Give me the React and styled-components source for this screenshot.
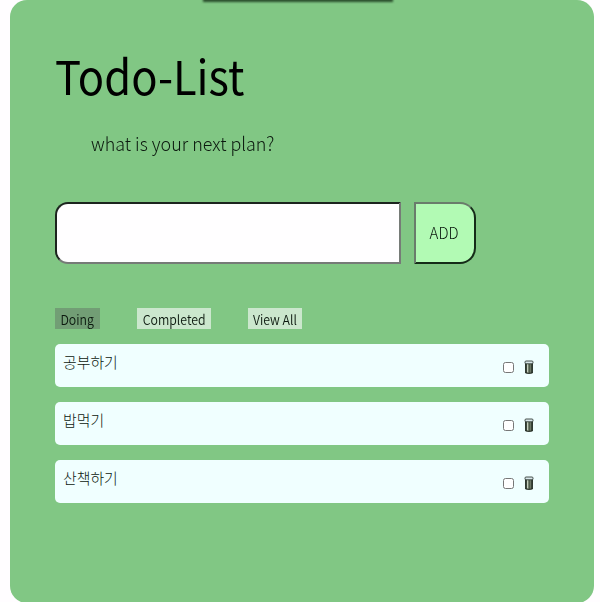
import React from "react";
import styled, { createGlobalStyle } from "styled-components";

const GlobalStyle = createGlobalStyle`
  * { box-sizing: border-box; }
  body {
    margin: 0;
    height: 602px;
    overflow: hidden;
    background: #fffdff;
    font-family: "Noto Sans CJK KR", "Noto Sans", sans-serif;
    font-weight: 300;
    color: #0b180e;
  }
`;

const Panel = styled.main`
  position: relative;
  width: 583.5px;
  height: 603px;
  margin-left: 10px;
  padding: 41px 45px 0 45px;
  border-radius: 17px;
  background: #81c784;
  overflow: hidden;
`;

const TopShadow = styled.div`
  position: absolute;
  top: -5px;
  left: 192.5px;
  width: 190px;
  height: 6.5px;
  background: #294d2c;
  filter: blur(0.8px);
`;

const Title = styled.h1`
  margin: 0;
  height: 68px;
  line-height: 68px;
  font-size: 47px;
  font-weight: 400;
  transform: scaleX(0.926);
  transform-origin: left;
  color: #000;
  white-space: nowrap;
`;

const Subtitle = styled.p`
  margin: 19px 0 0 36px;
  height: 30px;
  line-height: 30px;
  font-size: 19px;
  transform: scaleX(0.943);
  transform-origin: left;
  white-space: nowrap;
`;

const AddForm = styled.form`
  display: flex;
  gap: 13px;
  margin-top: 44px;
  height: 62px;
`;

const PlanInput = styled.input`
  width: 346px;
  height: 62px;
  padding: 0 12px;
  border: 2px solid;
  border-color: #1c241e #767b77 #767b77 #1c241e;
  border-radius: 13px 0 0 13px;
  background: #fffeff;
  font: inherit;
  outline: none;
`;

const AddButton = styled.button`
  width: 62px;
  height: 62px;
  padding: 0 1px 2px 0;
  border: 2px solid;
  border-color: #6a7c6c #152b18 #152b18 #6a7c6c;
  border-radius: 0 16px 16px 0;
  background: #b2fab4;
  color: #0b180e;
  font: inherit;
  font-size: 15.6px;
`;

const ButtonLabel = styled.span`
  display: inline-block;
  transform: scaleX(${({ $stretch }) => $stretch});
`;

const Filters = styled.nav`
  display: flex;
  gap: 37px;
  margin-top: 44px;
  height: 21px;
`;

const FilterButton = styled.button`
  width: ${({ $width }) => $width}px;
  height: 21px;
  padding: 0;
  border: 0;
  background: ${({ $active }) => ($active ? "#729e75" : "#cbe7cd")};
  color: #0b180e;
  font: inherit;
  font-size: 13.4px;
  font-weight: 350;
  line-height: 22px;
  white-space: nowrap;
`;

const TodoList = styled.ul`
  display: flex;
  flex-direction: column;
  gap: 15px;
  margin: 15px 0 0;
  padding: 0;
  list-style: none;
`;

const TodoItem = styled.li`
  display: flex;
  align-items: flex-start;
  width: 494px;
  height: 43px;
  padding: 0 14px 0 8px;
  border-radius: 5px;
  background: #f0ffff;
`;

const TodoText = styled.span`
  flex: 1;
  line-height: 22px;
  padding-top: 7px;
  font-size: 14.9px;
`;

const Check = styled.input`
  appearance: none;
  width: 11px;
  height: 11px;
  margin: 18px 10px 0 0;
  border: 1px solid #777;
  border-radius: 2.5px;
  background: #fff;
`;

const DeleteButton = styled.button`
  display: block;
  width: 11px;
  height: 15px;
  margin-top: 16px;
  padding: 0;
  border: 0;
  background: none;

  svg { display: block; }
`;

const TrashIcon = () => (
  <svg width="11" height="15" viewBox="0 0 11 15" aria-hidden="true">
    <path d="M1 2 1.5 12.9Q5 14.2 8.5 12.9L9 2Z" fill="#75806f" />
    <path d="M1.9 3v10M8.1 3v10" stroke="#151f17" strokeWidth="1.4" />
    <path d="M3.5 4v8.5" stroke="#c4cfbd" strokeWidth="1" />
    <path d="M5.7 4v9" stroke="#3a4737" strokeWidth=".8" />
    <rect x="1" y="1" width="8" height="2.8" rx="1" fill="#d9e7ea" stroke="#35403a" strokeWidth=".9" />
    <path d="M1.5 12.9q3.5 1 7 0" fill="none" stroke="#202820" strokeWidth="1" />
  </svg>
);

const filters = [
  { label: "Doing", width: 45, active: true },
  { label: "Completed", width: 74 },
  { label: "View All", width: 54 },
];

const todos = ["공부하기", "밥먹기", "산책하기"];

export default function App() {
  return (
    <>
      <GlobalStyle />
      <Panel>
        <TopShadow />
        <Title>Todo-List</Title>
        <Subtitle>what is your next plan?</Subtitle>
        <AddForm>
          <PlanInput aria-label="plan" />
          <AddButton type="button">
            <ButtonLabel $stretch={0.96}>ADD</ButtonLabel>
          </AddButton>
        </AddForm>
        <Filters>
          {filters.map(({ label, width, active }) => (
            <FilterButton key={label} $width={width} $active={active}>
              <ButtonLabel $stretch={0.92}>{label}</ButtonLabel>
            </FilterButton>
          ))}
        </Filters>
        <TodoList>
          {todos.map((text) => (
            <TodoItem key={text}>
              <TodoText>{text}</TodoText>
              <Check type="checkbox" aria-label={text} />
              <DeleteButton aria-label="delete">
                <TrashIcon />
              </DeleteButton>
            </TodoItem>
          ))}
        </TodoList>
      </Panel>
    </>
  );
}
